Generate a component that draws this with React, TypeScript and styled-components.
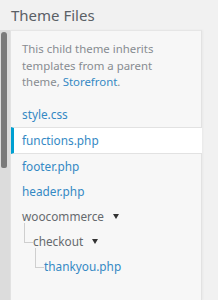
import * as React from 'react'
import styled, { createGlobalStyle } from 'styled-components'

const GlobalStyle = createGlobalStyle`
    html, body {
        margin: 0;
        padding: 0;
        background: #f1f1f1;
        font-family: "Noto Sans", "Open Sans", sans-serif;
    }
`

const Page = styled.div`
    width: 218px;
    height: 300px;
    overflow: hidden;
    display: flex;
    flex-direction: column;
`
const Title = styled.h2`
    margin: 0;
    padding: 4px 0 0 11px;
    height: 26px;
    font-size: 15px;
    font-weight: 400;
    color: #5a6066;
    line-height: 22px;
`
const Body = styled.div`
    flex: 1;
    display: flex;
`
const Track = styled.div`
    width: 10px;
    background: #dcdcdc;
    padding: 2px 0 0 1px;
    box-sizing: border-box;
`
const Thumb = styled.div`
    width: 6px;
    height: 136px;
    background: #7a7a7a;
    border-radius: 3px 3px 2px 2px;
`
const Panel = styled.div`
    width: 192px;
    background: #f7f7f7;
    border-left: 1px solid #e2e2e2;
    border-top: 1px solid #e6e6e6;
    border-right: 1px solid #e2e2e2;
    box-shadow: 1px 0 2px rgba(0, 0, 0, 0.04);
    box-sizing: border-box;
`
const Description = styled.p`
    margin: 0;
    padding: 10px 10px 11px 11px;
    font-size: 11.4px;
    line-height: 16.5px;
    color: #878c91;
`
const Link = styled.a`
    color: #3489c4;
    text-decoration: none;
`
const List = styled.ul`
    list-style: none;
    margin: 0;
    padding: 0;
`
const Item = styled.li<{ $active?: boolean; $depth?: number; $folder?: boolean }>`
    display: flex;
    align-items: center;
    height: ${p => (p.$active ? '27px' : '25px')};
    box-sizing: border-box;
    padding-left: ${p => 11 + (p.$depth || 0) * 11 - (p.$active ? 3 : 0)}px;
    font-size: 11.8px;
    color: ${p => (p.$folder ? '#666a6e' : '#3489c4')};
    background: ${p => (p.$active ? '#fff' : 'transparent')};
    border-left: ${p => (p.$active ? '3px solid #00a0d2' : 'none')};
    border-top: ${p => (p.$active ? '1px solid #e2e2e2' : 'none')};
    border-bottom: ${p => (p.$active ? '1px solid #e2e2e2' : 'none')};
    margin: ${p => (p.$active ? '0 -1px 0 0' : '0')};
`
const Branch = styled.span`
    position: relative;
    display: flex;
    align-items: center;
    &::before {
        content: '';
        position: absolute;
        left: -9px;
        top: -10px;
        width: 8px;
        height: 19px;
        border-left: 1px solid #cfcfcf;
        border-bottom: 1px solid #cfcfcf;
    }
`
const Caret = styled.span`
    margin-left: 9px;
    width: 0;
    height: 0;
    border-left: 3.5px solid transparent;
    border-right: 3.5px solid transparent;
    border-top: 5px solid #333;
`

const Label: React.FunctionComponent<{ depth: number; children: React.ReactNode }> = ({ depth, children }) =>
    depth > 0 ? <Branch>{children}</Branch> : <>{children}</>

export default function App() {
    return (
        <Page>
            <GlobalStyle />
            <Title>Theme Files</Title>
            <Body>
                <Track>
                    <Thumb />
                </Track>
                <Panel>
                    <Description>
                        This child theme inherits templates from a parent theme,{' '}
                        <Link href="#">Storefront</Link>.
                    </Description>
                    <List>
                        <Item>style.css</Item>
                        <Item $active>functions.php</Item>
                        <Item>footer.php</Item>
                        <Item>header.php</Item>
                        <Item $folder>
                            woocommerce <Caret />
                        </Item>
                        <Item $folder $depth={1}>
                            <Label depth={1}>
                                checkout <Caret />
                            </Label>
                        </Item>
                        <Item $depth={2}>
                            <Label depth={2}>thankyou.php</Label>
                        </Item>
                    </List>
                </Panel>
            </Body>
        </Page>
    )
}
